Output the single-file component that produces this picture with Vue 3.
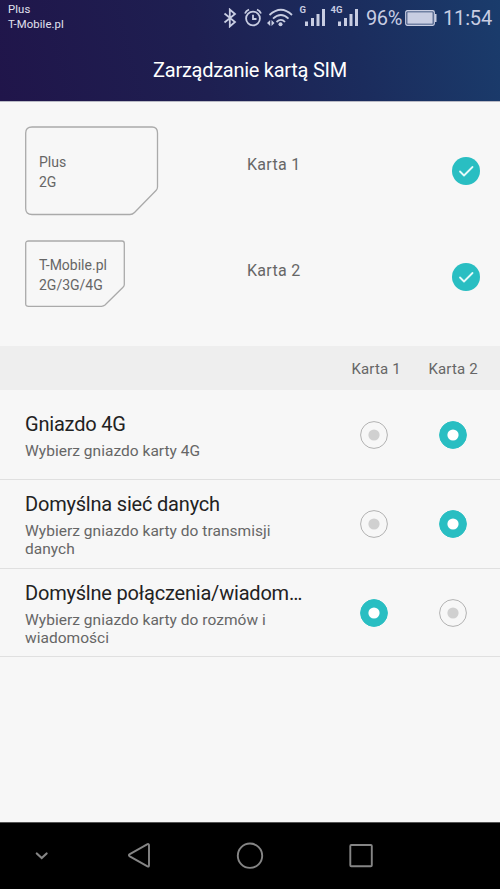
<script setup>
import { ref } from 'vue'

const cards = ref([
  { id: 1, label: 'Karta 1', carrier: 'Plus', network: '2G', size: 'large', w: 134, h: 90,
    path: 'M7 1H127Q132.500 1 132.500 7V61Q132.500 63 131 64.500L109.500 86.500Q107.500 88.500 105 88.500H7Q.7 88.500 .7 82.500V7Q.7 1 7 1Z' },
  { id: 2, label: 'Karta 2', carrier: 'T-Mobile.pl', network: '2G/3G/4G', size: 'small', w: 101, h: 68,
    path: 'M3.500 1H97Q99.300 1 99.300 3.500V44.500Q99.300 46 98 47.200L80 65Q78.500 66.300 76.500 66.300H3.500Q.7 66.300 .7 64V3.500Q.7 1 3.500 1Z' },
])

const settings = ref([
  { title: 'Gniazdo 4G', hint: 'Wybierz gniazdo karty 4G', selected: 2 },
  { title: 'Domyślna sieć danych', hint: 'Wybierz gniazdo karty do transmisji danych', selected: 2 },
  { title: 'Domyślne połączenia/wiadom…', hint: 'Wybierz gniazdo karty do rozmów i wiadomości', selected: 1 },
])
</script>

<template>
  <div class="screen">
    <header class="header">
      <div class="status">
        <div class="carriers"><div>Plus</div><div>T-Mobile.pl</div></div>
        <div class="indicators">
          <svg class="bt" width="14" height="20" viewBox="0 0 14 20"><path d="M1.500 5.500L12 14L6.800 18.500V1.500L12 6L1.500 14.500" /></svg>
          <svg class="alarm" width="18" height="20" viewBox="0 0 18 20"><circle cx="9" cy="10.500" r="6.900" /><path d="M9 6.800V11H12.500M1 5.500Q2 2.800 5 1.500M17 5.500Q16 2.800 13 1.500" /></svg>
          <svg class="wifi" width="27" height="20" viewBox="0 0 27 20">
            <path d="M2.500 7Q14 -3.500 25 7M6 10.700Q14 3.200 21.500 10.700M9.500 14Q14 9.700 18 14" />
            <circle cx="13.500" cy="16.200" r="2" class="solid" />
            <path class="solid" d="M0 15L3.200 12V18ZM7.500 15L4.500 12V18Z" />
          </svg>
          <div class="signal first"><span class="net">G</span><svg width="22" height="20" viewBox="0 0 22 20"><path class="solid" d="M1 13.500H4V18H1ZM7 10H10V18H7ZM12.500 6H15.500V18H12.500ZM18 1H21V18H18Z" /></svg></div>
          <div class="signal second"><span class="net">4G</span><svg width="22" height="20" viewBox="0 0 22 20"><path class="solid" d="M1 13.500H4V18H1ZM7 10H10V18H7ZM12.500 6H15.500V18H12.500ZM18 1H21V18H18Z" /></svg></div>
          <span class="percent">96%</span>
          <svg class="battery" width="32" height="16" viewBox="0 0 32 16"><rect x=".75" y=".75" width="28.500" height="14.500" rx="1.500" /><path class="solid" d="M2.300 2.300H27.700V13.700H2.300ZM30 4H31.500V12H30Z" /></svg>
          <span class="clock">11:54</span>
        </div>
      </div>
      <h1 class="title">Zarządzanie kartą SIM</h1>
    </header>

    <main class="content">
      <section class="cards">
        <div v-for="card in cards" :key="card.id" class="card-row" :class="card.size">
          <div class="sim">
            <svg class="outline" :width="card.w" :height="card.h" :viewBox="`0 0 ${card.w} ${card.h}`"><path :d="card.path" /></svg>
            <div class="sim-text"><div>{{ card.carrier }}</div><div>{{ card.network }}</div></div>
          </div>
          <span class="card-name">{{ card.label }}</span>
          <svg class="check" width="28" height="28" viewBox="0 0 28 28"><circle cx="14" cy="14" r="14" /><path d="M8 14.500L12 18.500L20.500 10" /></svg>
        </div>
      </section>

      <div class="columns"><span v-for="card in cards" :key="card.id">{{ card.label }}</span></div>

      <section v-for="item in settings" :key="item.title" class="setting">
        <div class="copy">
          <h2>{{ item.title }}</h2>
          <p>{{ item.hint }}</p>
        </div>
        <div class="radios">
          <svg v-for="n in 2" :key="n" class="radio" :class="{ on: item.selected === n }" width="28" height="28" viewBox="0 0 28 28">
            <circle class="ring" cx="14" cy="14" r="13.400" /><circle class="dot" cx="14" cy="14" r="5.600" />
          </svg>
        </div>
      </section>
    </main>

    <nav class="nav">
      <svg width="500" height="66" viewBox="0 0 500 66">
        <path class="chevron" d="M36.800 30.500L41.700 35L46.600 30.500" />
        <path d="M129.800 31.200L147.500 21.200Q149 20.700 149 22.200V42.600Q149 44.100 147.500 43.400L129.800 33.400Q128 32.200 129.800 31.200Z" />
        <circle cx="250" cy="32.700" r="12.200" />
        <rect x="350.300" y="22" width="21.500" height="21.300" rx="1" />
      </svg>
    </nav>
  </div>
</template>

<style>
body { margin: 0; overflow: hidden; }
</style>

<style scoped>
.screen { width: 500px; height: 889px; display: flex; flex-direction: column; background: #f7f7f7; color: #666; font-family: Roboto, "Liberation Sans", sans-serif; }
.header { height: 101px; flex: none; background: linear-gradient(76deg, #20154a 0%, #1e1f51 40%, #1b2c5d 70%, #1a3c6c 100%); border-bottom: 1px solid #b9bac5; box-sizing: content-box; }
.status { height: 38px; display: flex; justify-content: space-between; color: #c8cde2; }
.carriers { padding: 2px 0 0 8px; font-size: 11.3px; line-height: 15px; color: #e2e2ef; letter-spacing: .1px; }
.indicators { display: flex; align-items: flex-start; padding: 8px 8px 0 0; }
.indicators svg { fill: none; stroke: #c8cde2; stroke-width: 1.8; flex: none; }
.indicators .solid { fill: #c8cde2; stroke: none; }
.alarm { margin-left: 7px; }
.wifi { margin-left: 5px; }
.signal { position: relative; height: 20px; margin-left: 9.5px; }
.signal.second { margin-left: 11px; }
.signal svg { display: block; }
.net { position: absolute; left: -4px; top: -4px; font-size: 9.5px; line-height: 12px; font-weight: 700; }
.second .net { left: -6px; }
.percent { width: 37px; margin-left: 7.5px; font-size: 20px; line-height: 21px; white-space: nowrap; letter-spacing: -.4px; }
.indicators .battery { margin: 2px 0 0 2px; stroke-width: 1.3; }
.clock { width: 49px; margin-left: 6px; font-size: 20px; line-height: 21px; white-space: nowrap; letter-spacing: -.15px; }
.title { margin: 18px 0 0; text-align: center; color: #fff; font-size: 20px; line-height: 28px; font-weight: 400; letter-spacing: -.27px; }
.content { flex: 1; }
.cards { height: 244px; padding: 24px 20px 0 25px; box-sizing: border-box; }
.card-row { display: grid; grid-template-columns: 222px 1fr 28px; height: 114px; }
.sim { position: relative; }
.outline { position: absolute; left: 0; top: 0; fill: none; stroke: #aaa; stroke-width: 1.3; }
.sim-text { padding: 27px 0 0 14px; font-size: 14px; line-height: 19.5px; }
.small .sim-text { padding-top: 16px; }
.card-name { padding-top: 29px; font-size: 16px; line-height: 20px; letter-spacing: .3px; }
.small .card-name { padding-top: 21px; }
.check { margin-top: 31px; fill: #29bec2; }
.small .check { margin-top: 22.5px; }
.check path { fill: none; stroke: #e4fafa; stroke-width: 1.8; stroke-linecap: round; stroke-linejoin: round; }
.columns { height: 44px; background: #eee; display: flex; justify-content: flex-end; gap: 27px; padding-right: 21.500px; font-size: 15px; line-height: 47.500px; }
.columns span { width: 50px; white-space: nowrap; letter-spacing: .15px; }
.setting { height: 89px; box-sizing: border-box; border-bottom: 1px solid #e0e0e0; display: flex; align-items: center; justify-content: space-between; padding: 0 33.3px 0 25px; }
.setting:nth-of-type(2) { height: 90px; padding-top: 1px; }
.setting:last-child { height: 88px; padding-top: 1px; }
.copy { width: 290px; padding-top: 2px; }
.copy h2 { margin: 0 0 6px; font-size: 20px; line-height: 24px; font-weight: 400; color: #222; white-space: nowrap; letter-spacing: -.2px; }
.copy p { margin: 0; width: 260px; font-size: 15.5px; line-height: 18px; letter-spacing: .03px; }
.radios { display: flex; gap: 51px; }
.ring { fill: none; stroke: #b2b2b2; stroke-width: 1; }
.dot { fill: #d0d0d0; }
.on .ring { fill: #29bec2; stroke: #29bec2; }
.on .dot { fill: #fff; }
.nav { height: 67px; flex: none; box-sizing: border-box; border-top: 1px solid #555; background: #000; }
.nav svg { display: block; fill: none; stroke: #858585; stroke-width: 1.9; }
.nav .chevron { stroke-width: 2.2; stroke-linecap: round; }
</style>
